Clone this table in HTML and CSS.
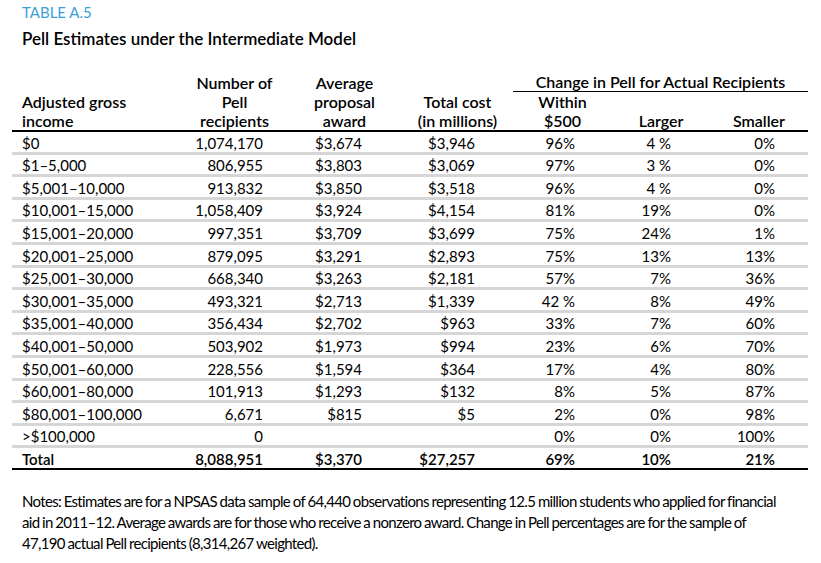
FILE: index.html
```html
<!DOCTYPE html>
<html lang="en">
<head>
<meta charset="utf-8">
<title>Table A.5</title>
<link rel="stylesheet" href="styles.css">
</head>
<body>
<div class="page">
  <div class="label">TABLE A.5</div>
  <h1 class="title">Pell Estimates under the Intermediate Model</h1>
  <table class="data">
    <colgroup>
      <col class="c1"><col class="c2"><col class="c3"><col class="c4"><col class="c5"><col class="c6"><col class="c7">
    </colgroup>
    <thead>
      <tr>
        <th rowspan="2" class="left">Adjusted gross<br>income</th>
        <th rowspan="2">Number of<br>Pell<br>recipients</th>
        <th rowspan="2">Average<br>proposal<br>award</th>
        <th rowspan="2">Total cost<br>(in millions)</th>
        <th colspan="3" class="span">Change in Pell for Actual Recipients</th>
      </tr>
      <tr>
        <th>Within<br>$500</th>
        <th>Larger</th>
        <th>Smaller</th>
      </tr>
    </thead>
    <tbody>
      <tr><td>$0</td><td class="n2">1,074,170</td><td class="n3">$3,674</td><td class="n4">$3,946</td><td class="n5">96%</td><td class="n6">4 %</td><td class="n7">0%</td></tr>
      <tr><td>$1–5,000</td><td class="n2">806,955</td><td class="n3">$3,803</td><td class="n4">$3,069</td><td class="n5">97%</td><td class="n6">3 %</td><td class="n7">0%</td></tr>
      <tr><td>$5,001–10,000</td><td class="n2">913,832</td><td class="n3">$3,850</td><td class="n4">$3,518</td><td class="n5">96%</td><td class="n6">4 %</td><td class="n7">0%</td></tr>
      <tr><td>$10,001–15,000</td><td class="n2">1,058,409</td><td class="n3">$3,924</td><td class="n4">$4,154</td><td class="n5">81%</td><td class="n6">19%</td><td class="n7">0%</td></tr>
      <tr><td>$15,001–20,000</td><td class="n2">997,351</td><td class="n3">$3,709</td><td class="n4">$3,699</td><td class="n5">75%</td><td class="n6">24%</td><td class="n7">1%</td></tr>
      <tr><td>$20,001–25,000</td><td class="n2">879,095</td><td class="n3">$3,291</td><td class="n4">$2,893</td><td class="n5">75%</td><td class="n6">13%</td><td class="n7">13%</td></tr>
      <tr><td>$25,001–30,000</td><td class="n2">668,340</td><td class="n3">$3,263</td><td class="n4">$2,181</td><td class="n5">57%</td><td class="n6">7%</td><td class="n7">36%</td></tr>
      <tr><td>$30,001–35,000</td><td class="n2">493,321</td><td class="n3">$2,713</td><td class="n4">$1,339</td><td class="n5">42 %</td><td class="n6">8%</td><td class="n7">49%</td></tr>
      <tr><td>$35,001–40,000</td><td class="n2">356,434</td><td class="n3">$2,702</td><td class="n4">$963</td><td class="n5">33%</td><td class="n6">7%</td><td class="n7">60%</td></tr>
      <tr><td>$40,001–50,000</td><td class="n2">503,902</td><td class="n3">$1,973</td><td class="n4">$994</td><td class="n5">23%</td><td class="n6">6%</td><td class="n7">70%</td></tr>
      <tr><td>$50,001–60,000</td><td class="n2">228,556</td><td class="n3">$1,594</td><td class="n4">$364</td><td class="n5">17%</td><td class="n6">4%</td><td class="n7">80%</td></tr>
      <tr><td>$60,001–80,000</td><td class="n2">101,913</td><td class="n3">$1,293</td><td class="n4">$132</td><td class="n5">8%</td><td class="n6">5%</td><td class="n7">87%</td></tr>
      <tr><td>$80,001–100,000</td><td class="n2">6,671</td><td class="n3">$815</td><td class="n4">$5</td><td class="n5">2%</td><td class="n6">0%</td><td class="n7">98%</td></tr>
      <tr><td>&gt;$100,000</td><td class="n2">0</td><td class="n3"></td><td class="n4"></td><td class="n5">0%</td><td class="n6">0%</td><td class="n7">100%</td></tr>
      <tr class="total"><td>Total</td><td class="n2">8,088,951</td><td class="n3">$3,370</td><td class="n4">$27,257</td><td class="n5">69%</td><td class="n6">10%</td><td class="n7">21%</td></tr>
    </tbody>
  </table>
  <p class="notes">Notes: Estimates are for a NPSAS data sample of 64,440 observations representing 12.5 million students who applied for financial aid in 2011–12. Average awards are for those who receive a nonzero award. Change in Pell percentages are for the sample of 47,190 actual Pell recipients (8,314,267 weighted).</p>
</div>
</body>
</html>
```

FILE: styles.css
```css
html, body {
  margin: 0;
  padding: 0;
  background: #ffffff;
}

body {
  font-family: Lato, "Open Sans", "Liberation Sans", sans-serif;
  color: #000;
}

.page {
  padding: 3px 0 0 12px;
}

.label {
  margin-left: 10px;
  font-size: 15px;
  line-height: 18px;
  color: #3b9fd6;
}

.title {
  margin: 8px 0 0 10px;
  font-size: 17px;
  line-height: 20px;
  font-weight: 600;
}

.data {
  margin-top: 23px;
  width: 796px;
  table-layout: fixed;
  border-collapse: collapse;
  font-size: 15px;
}

.c1 { width: 170px; }
.c2 { width: 105px; }
.c3 { width: 115px; }
.c4 { width: 111px; }
.c5 { width: 99px; }
.c6 { width: 98px; }
.c7 { width: 98px; }

.data th {
  font-size: 16px;
  font-weight: 600;
  line-height: 19px;
  padding: 0;
  text-align: center;
  vertical-align: bottom;
}

.data thead tr:last-child th,
.data thead th[rowspan] {
  border-bottom: 2px solid #000;
}

.data th.left {
  text-align: left;
  padding-left: 10px;
}

.data th.span {
  border-bottom: 1px solid #000;
}

.data td {
  padding: 1.6px 0 0;
  line-height: 18px;
  border-bottom: 3px solid #d6d6d6;
  vertical-align: top;
  white-space: nowrap;
}

.data td:first-child {
  padding-left: 10px;
}

.data .n2 { text-align: right; padding-right: 24px; }
.data .n3 { text-align: right; padding-right: 40px; }
.data .n4 { text-align: right; padding-right: 38px; }
.data .n5 { text-align: right; padding-right: 37px; }
.data .n6 { text-align: right; padding-right: 39px; }
.data .n7 { text-align: right; padding-right: 33px; }

.data tr.total td {
  font-weight: 600;
  border-bottom: 2px solid #000;
}

.notes {
  margin: 21px 0 0 10px;
  width: 758px;
  font-size: 15px;
  line-height: 21px;
  letter-spacing: -0.68px;
  word-spacing: -0.5px;
}
```
